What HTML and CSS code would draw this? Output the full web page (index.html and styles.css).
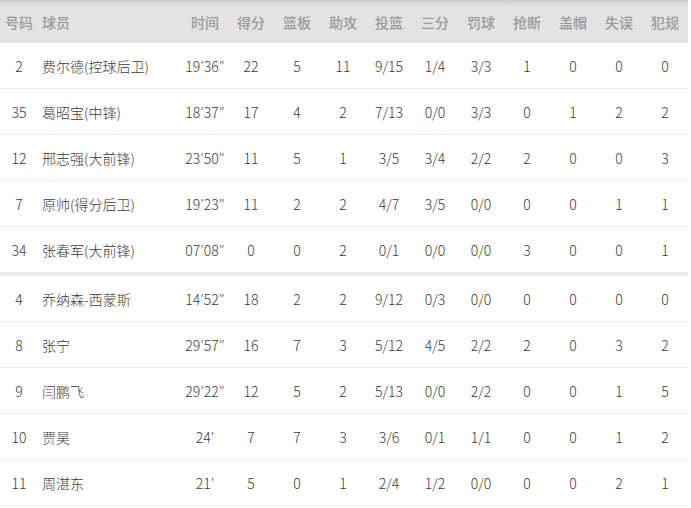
FILE: index.html
```html
<!DOCTYPE html>
<html lang="zh">
<head>
<meta charset="utf-8">
<link rel="stylesheet" href="styles.css">
</head>
<body>
<table class="stats">
  <colgroup>
    <col class="c-num"><col class="c-name"><col class="c-s"><col class="c-s"><col class="c-s"><col class="c-s"><col class="c-s"><col class="c-s"><col class="c-s"><col class="c-s"><col class="c-s"><col class="c-s"><col class="c-s">
  </colgroup>
  <thead>
    <tr><th>号码</th><th class="name">球员</th><th>时间</th><th>得分</th><th>篮板</th><th>助攻</th><th>投篮</th><th>三分</th><th>罚球</th><th>抢断</th><th>盖帽</th><th>失误</th><th>犯规</th></tr>
  </thead>
  <tbody>
    <tr><td>2</td><td class="name">费尔德(控球后卫)</td><td>19′36″</td><td>22</td><td>5</td><td>11</td><td>9/15</td><td>1/4</td><td>3/3</td><td>1</td><td>0</td><td>0</td><td>0</td></tr>
    <tr><td>35</td><td class="name">葛昭宝(中锋)</td><td>18′37″</td><td>17</td><td>4</td><td>2</td><td>7/13</td><td>0/0</td><td>3/3</td><td>0</td><td>1</td><td>2</td><td>2</td></tr>
    <tr><td>12</td><td class="name">邢志强(大前锋)</td><td>23′50″</td><td>11</td><td>5</td><td>1</td><td>3/5</td><td>3/4</td><td>2/2</td><td>2</td><td>0</td><td>0</td><td>3</td></tr>
    <tr><td>7</td><td class="name">原帅(得分后卫)</td><td>19′23″</td><td>11</td><td>2</td><td>2</td><td>4/7</td><td>3/5</td><td>0/0</td><td>0</td><td>0</td><td>1</td><td>1</td></tr>
    <tr class="last-starter"><td>34</td><td class="name">张春军(大前锋)</td><td>07′08″</td><td>0</td><td>0</td><td>2</td><td>0/1</td><td>0/0</td><td>0/0</td><td>3</td><td>0</td><td>0</td><td>1</td></tr>
    <tr><td>4</td><td class="name">乔纳森-西蒙斯</td><td>14′52″</td><td>18</td><td>2</td><td>2</td><td>9/12</td><td>0/3</td><td>0/0</td><td>0</td><td>0</td><td>0</td><td>0</td></tr>
    <tr><td>8</td><td class="name">张宁</td><td>29′57″</td><td>16</td><td>7</td><td>3</td><td>5/12</td><td>4/5</td><td>2/2</td><td>2</td><td>0</td><td>3</td><td>2</td></tr>
    <tr><td>9</td><td class="name">闫鹏飞</td><td>29′22″</td><td>12</td><td>5</td><td>2</td><td>5/13</td><td>0/0</td><td>2/2</td><td>0</td><td>0</td><td>1</td><td>5</td></tr>
    <tr><td>10</td><td class="name">贾昊</td><td>24′</td><td>7</td><td>7</td><td>3</td><td>3/6</td><td>0/1</td><td>1/1</td><td>0</td><td>0</td><td>1</td><td>2</td></tr>
    <tr><td>11</td><td class="name">周湛东</td><td>21′</td><td>5</td><td>0</td><td>1</td><td>2/4</td><td>1/2</td><td>0/0</td><td>0</td><td>0</td><td>2</td><td>1</td></tr>
  </tbody>
</table>
</body>
</html>
```

FILE: styles.css
```css
html, body {
  margin: 0;
  padding: 0;
  background: #fff;
}

.stats {
  width: 688px;
  border-collapse: collapse;
  table-layout: fixed;
  font-family: "Noto Sans CJK SC", "Liberation Sans", sans-serif;
  font-size: 14px;
  font-weight: 300;
  color: #3a3a3a;
}

.c-num { width: 38px; }
.c-name { width: 144px; }
.c-s { width: 46px; }

.stats th {
  height: 43px;
  padding: 0;
  font-weight: 500;
  color: #9a9a9a;
  text-align: center;
  background: linear-gradient(to bottom, #c9c9c9 0px, #dcdcdc 4px, #e3e3e3 8px, #e3e3e3 100%);
}

.stats td {
  height: 45px;
  padding: 0;
  text-align: center;
  border-bottom: 1px solid #ececec;
}

.stats .name {
  text-align: left;
  padding-left: 4px;
}

.stats tr.last-starter td {
  border-bottom: 4px solid #ececec;
}
```
